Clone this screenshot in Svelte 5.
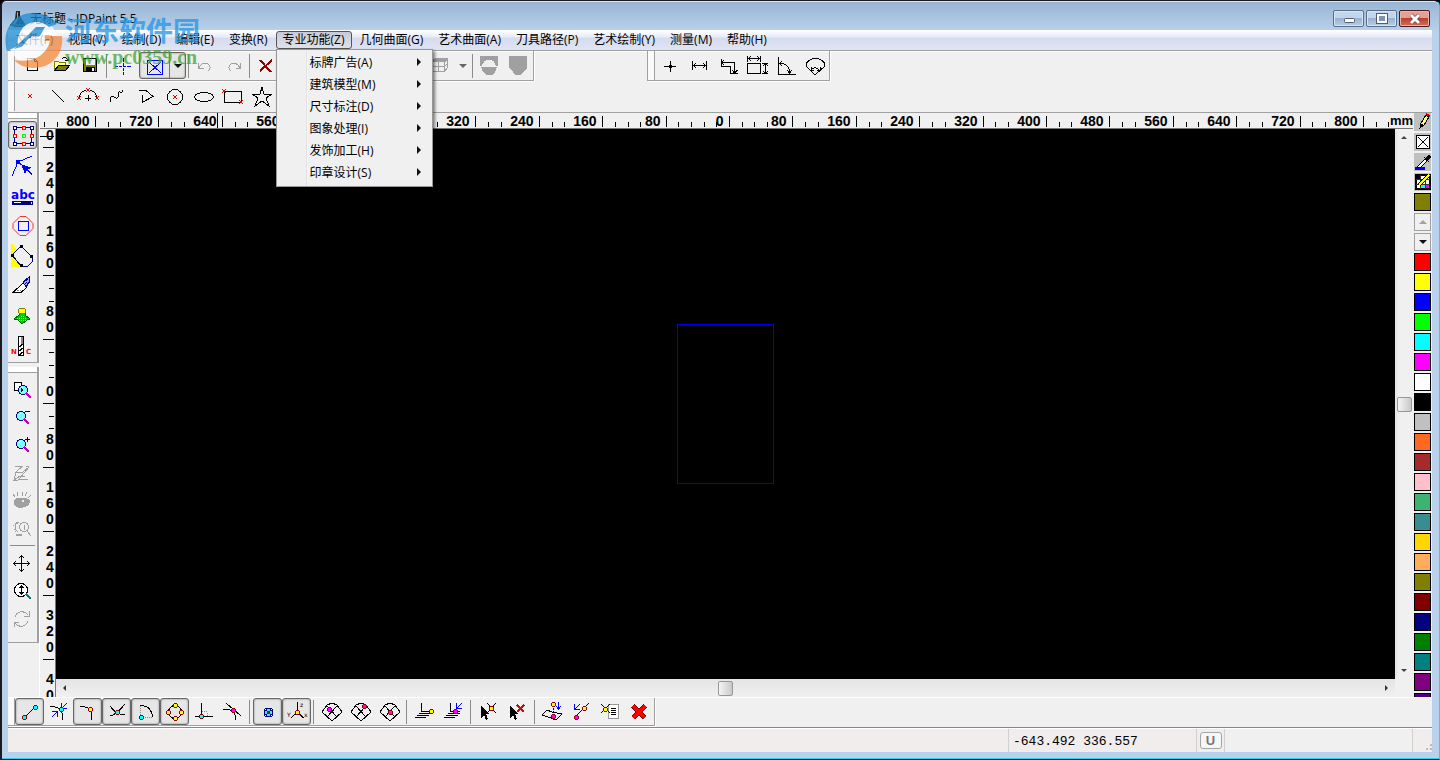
<script lang="ts">
    const menus = [
        "文件(F)", "视图(V)", "绘制(D)", "编辑(E)", "变换(R)", "专业功能(Z)",
        "几何曲面(G)", "艺术曲面(A)", "刀具路径(P)", "艺术绘制(Y)", "测量(M)", "帮助(H)",
    ];
    const submenu = ["标牌广告(A)", "建筑模型(M)", "尺寸标注(D)", "图象处理(I)", "发饰加工(H)", "印章设计(S)"];

    let openMenu = $state("专业功能(Z)");

    const drawTools = ["point", "line", "arc", "spline", "polygon", "circle", "ellipse", "rect", "star"];
    const measureTools = ["plus", "distance", "corner", "bounds", "angle", "sector"];
    const sideTools = ["select", "node", "text", "shapes", "polyline", "knife", "surface", "nc"];
    const viewTools = ["zoomArea", "zoomOut", "zoomIn", "redraw", "eye", "zoomPrev", "sep", "pan", "zoomLive", "rotate"];
    const snapTools = [
        "snapEnd", "snapNear", "snapCorner", "snapCross", "snapCenter", "snapQuad", "snapPerp", "snapTan", "sep",
        "snapGrid", "snapAxis", "sep", "meshNode", "meshEdge", "meshCenter", "sep", "planeEnd", "planeNear", "sep",
        "pickPoint", "pickDelete", "sep", "project", "along", "list", "remove",
    ];

    let pressed = $state(["select", "snapEnd", "snapCorner", "snapCross", "snapCenter", "snapQuad", "snapGrid", "snapAxis"]);

    function toggle(name: string) {
        pressed = pressed.includes(name) ? pressed.filter((n) => n !== name) : [...pressed, name];
    }

    const colors = [
        "#ff0000", "#ffff00", "#0000ff", "#00ff00", "#00ffff", "#ff00ff", "#ffffff", "#000000",
        "#c0c0c0", "#ff6820", "#a52a2a", "#ffc0cb", "#3cb371", "#388e8e", "#ffd700", "#ffad5b",
        "#808000", "#800000", "#000080", "#008000", "#008080", "#800080", "#4b0082",
    ];

    // ruler marks, measured from the zero tick
    const stepX = 63.4;
    const stepY = 63.9;
    const marksX = Array.from({ length: 22 }, (_, i) => {
        const n = i - 10;
        const label = String(Math.abs(n) * 80);
        return {
            label: n > 10 ? "" : label,
            x: Math.round(n * stepX),
            minors: Array.from({ length: n > 10 ? 2 : 5 - label.length }, (_, j) => Math.round((n - 1) * stepX + (j + 1) * 12.7)),
        };
    });
    const marksY = Array.from({ length: 10 }, (_, i) => {
        const n = i - 4;
        const label = String(Math.abs(n) * 80);
        return {
            digits: label.split(""),
            y: Math.round(n * stepY),
            minors: Array.from({ length: [0, 3, 2, 0][label.length] }, (_, j) => Math.round((n - 1) * stepY + (j + 1) * 12.7)),
        };
    });

    const dot = (x: number, y: number, fill: string) =>
        `<g stroke="none"><rect x="${x - 1}" y="${y - 2}" width="3" height="5" fill="#900000"/><rect x="${x - 2}" y="${y - 1}" width="5" height="3" fill="#900000"/><rect x="${x - 1}" y="${y - 1}" width="3" height="3" fill="${fill}"/></g>`;
    const square = (x: number, y: number, c = "#f00") => `<rect x="${x - 1}.5" y="${y - 1}.5" width="3" height="3" stroke="${c}" fill="#fff"/>`;
    const redX = (x: number, y: number) => `<path stroke="#e00000" d="M${x - 2} ${y - 2}l4 4m0-4l-4 4"/>`;
    const mesh = '<path d="M2 12l5-7 5-2 5 2 5 7-10 9zM7 6l10 11M17 6L7 17"/>';
    const plane = '<path d="M8.500 3v8.500h9M6 13.500h12M4 15.500h12M2 17.500h11"/>';
    const pointer = '<path fill="#000" stroke="none" d="M4 6v12l3-3 2 5 2-1-2-5h3z"/>';
    const nearArrow = '<path stroke="#00f" d="M20 3l-5 5M14.500 3v5.500h5"/>';
    const lens = (x: number, y: number) =>
        `<circle cx="${x}" cy="${y}" r="4.500" fill="#7ff" stroke="#000080"/><path stroke="#fff" d="M${x - 2} ${y - 1}l2-2"/><path stroke="#c000c0" stroke-width="2.500" d="M${x + 3} ${y + 3}l5 5"/>`;

    const icons: Record<string, string> = {
        fileNew: '<path fill="#fff" d="M6.500 4.500h7l3 3v9h-10zM13.500 4.500v3h3"/>',
        open: '<path fill="#ffff9c" stroke="#808000" d="M4.500 16.500v-9h4l1 1h6v3"/><path fill="#808000" d="M4.500 16.500l4-5h11l-4 5z"/><path d="M12 5c2-2 4-2 6 1m0-3v3h-3"/>',
        save: '<path fill="#808000" d="M4.500 4.500h13v13h-13z"/><path fill="#efefef" stroke="none" d="M7 5h9v6H7z"/><path fill="#000" stroke="none" d="M7 13h9v5H7z"/><path fill="#fff" stroke="none" d="M13 14h2v3h-2z"/>',
        origin: '<path stroke="#00f" d="M4 12.500h3m1 0h3m1 0h3m1 0h4M12.500 4v4m0 1v4m0 1v3m0 1v3"/>',
        frame: '<path stroke="#00f" d="M4.500 5.500h15v14h-15zM6 7l12 11M18 7L6 18"/>',
        undo: '<path stroke="#a0a0a0" d="M5.500 9v5h5M6 14c2-4 5-6 9-4 3 2 3 5 0 7"/>',
        redo: '<path stroke="#a0a0a0" d="M18.500 9v5h-5M18 14c-2-4-5-6-9-4-3 2-3 5 0 7"/>',
        cut: '<path stroke="#900000" stroke-width="2" d="M6 6l11 12M18 6L6 17"/>',
        grid: '<path fill="#a0a0a0" stroke="#a0a0a0" d="M3.500 6.500l3-2h12l-2 3h-13z"/><path stroke="#a0a0a0" d="M3.500 7.500h12v10h-12zM15.500 7.500l3-3v9l-3 4M3.500 12.500h12l3-3M9.500 7.500v10"/>',
        dome: '<path fill="#a0a0a0" stroke="none" d="M3 2h18v10H3zM4 13h16l-2 5-3 3H9l-3-3z"/><path fill="#efefef" stroke="none" d="M5 12c1-8 13-8 14 0z"/>',
        shield: '<path fill="#a0a0a0" stroke="none" d="M3 2h18v12l-4 4-2 3H9l-2-3-4-4z"/>',
        point: redX(12, 11),
        line: '<path d="M5 5l12 12"/>',
        arc: '<path d="M3 13C5 2 19 2 21 13M12.500 10v6M9 13.500h6"/>' + redX(3, 13) + redX(21, 13) + redX(12, 5),
        spline: '<path d="M5 17c1-9 3-5 6-4s2-5 3-6 2 3 4-2"/>',
        polygon: '<path d="M5 5.500h7l7 6-11 6v-8"/>',
        circle: '<circle cx="12" cy="12" r="7.500"/>' + redX(12, 12),
        ellipse: '<ellipse cx="12" cy="12" rx="9.500" ry="4.500"/>',
        rect: '<path d="M3.500 6.500h17v11h-17z"/>' + redX(3, 6) + redX(20, 17),
        star: '<path d="M12 2l2 7h8l-6 4 3 8-7-5-7 5 3-8-6-4h8z"/>',
        plus: '<path d="M6 12.500h12M12.500 7v11"/><path fill="#000" stroke="none" d="M11 11h3v3h-3z"/>',
        distance: '<path d="M5.500 7v9M19.500 7v9M6 11.500h13M9 9l-2.500 2.500L9 14M16 9l2.500 2.500L16 14"/>',
        corner: '<path d="M5.500 5v7h9v8M14 19.500h8M6 8.500h12.500V19M8 6L6 8.500 8 11M16 16l2.500 3 3-3"/>',
        bounds: '<path d="M2.500 9.500h13v10h-13zM2.500 2v6M15.500 2v6M3 4.500h12M6 2L4 4.500 6 7M12 2l2 2.500L12 7M17 9.500h6M17 19.500h6M20.500 10v9M18 12l2.500-2 2.500 2M18 17l2.500 2 2.500-2"/>',
        angle: '<path d="M4.500 3v17h17M5 9.500c7-1 11 4 10.500 10M8 7L5.500 9.500 8 12M13 16l2.500 3 2.500-3"/>',
        sector: '<path d="M12 21l-9-9c0-10 19-10 19 0zM8 16c2-3 6-3 8 0M8 12.500v3.500h3M17 12.500v3.500h-3"/>',
        select: '<path stroke="#000080" d="M3.500 4.500h17v16h-17z"/>' + square(3, 4, "#000080") + square(20, 4, "#000080") + square(3, 20, "#000080") + square(20, 20, "#000080") + square(12, 4) + square(12, 20) + square(3, 12) + square(20, 12) + square(12, 12, "#0f0"),
        node: '<path stroke="#00f" d="M7 8l14-6M7 8L1 22M7 8l4 3"/><path fill="#00f" stroke="none" d="M5 6h4v4H5zM10 10l11 4-4 1 4 5-1 1-4-5-2 4z"/>',
        text: '<text x="12" y="15" text-anchor="middle" font-family="DejaVu Sans" font-weight="bold" font-size="12" fill="#00f" stroke="none">abc</text><path fill="#000080" stroke="#000080" d="M1.500 17.500h20v3h-20z"/><path stroke="#fff" d="M3 18.500h7"/><path stroke="#ff0" d="M20.500 18v2"/>',
        shapes: '<path stroke="#f00" stroke-width=".8" shape-rendering="auto" d="M9 2.500h6l7 7v5l-7 7H9l-7-7v-5z"/><path stroke="#00f" d="M7.500 7.500h10v9h-10z"/>',
        polyline: '<path fill="#ff0" stroke="none" d="M0 0h2l8 12v9l-3 2H0z"/><path stroke="#000080" fill="#efefef" d="M1 11l9-9 11 11v5l-4 4h-7z"/><path fill="#000" stroke="none" d="M0 10h3v3H0zM9 1h3v3H9zM19 11h3v3h-3zM9 20h3v3H9z"/>',
        knife: '<path fill="#fff" d="M2 18.500L12 9l4 4-6 5.500z"/><path fill="#aaf" stroke="#000080" d="M12 8l6-5v6l-3 4z"/><path stroke="#000080" stroke-dasharray="1 1" d="M13 8l4-3M14 10l3-3M15 12l3-4"/><path stroke="#888" stroke-dasharray="2 1" d="M6 16h4"/>',
        surface: '<path fill="#0c0" stroke="#006000" d="M3 15l5-4V7h6v4l5 4-3 1-5 4-4-4z"/><path stroke="#7f7" stroke-dasharray="1 1" d="M6 14h10M8 16h7M10 12h4"/><ellipse cx="11" cy="7" rx="4" ry="2.500" fill="#ff0" stroke="#808000"/>',
        nc: '<path fill="#fff" d="M7.500 2.500h5v19h-5z"/><path fill="#888" stroke="none" d="M10 3h2v7h-2z"/><path d="M7 14l6-5M7 18l6-5M7 22l6-5"/><text x="0" y="20" font-family="DejaVu Sans" font-weight="bold" font-size="7" fill="#f00" stroke="none">N</text><text x="15" y="20" font-family="DejaVu Sans" font-weight="bold" font-size="7" fill="#f00" stroke="none">C</text>',
        zoomArea: '<path fill="#fff" d="M4.500 5.500h7v8h-7z"/>' + lens(13, 13) + '<path fill="#000" stroke="none" d="M11 11l3 2-3 2z"/>',
        zoomOut: lens(11, 11) + '<path stroke="#000080" d="M15 6.500h5"/>',
        zoomIn: lens(11, 11) + '<path stroke="#000080" d="M15 6.500h5M17.500 4v5"/>',
        redraw: '<path stroke="#a0a0a0" d="M5 5.500h7L6 11h7l6-5-10 12h9M16 5.500h3M6 11l-2 8 3-2 3-2h5M4 15v4h4"/>',
        eye: '<path fill="#a0a0a0" stroke="#a0a0a0" d="M4 12l4-3h8l4 3-2 4-5 2H8l-3-2zM5 8L3 5M8 7L7 3M12 7V3M15 7l2-4M18 9l3-3"/><circle cx="13" cy="12" r="1" fill="#eee" stroke="none"/>',
        zoomPrev: '<g stroke="#a0a0a0"><circle cx="14" cy="10" r="4.500"/><path d="M14.500 8v5M17 14l4 5M9 5l-4 3v4l3 3"/><path stroke-dasharray="1 1" d="M7 5l-4 4M4 12l2 4"/><path stroke-width="2" d="M6 18h6"/></g>',
        pan: '<path d="M4 12.500h15M11.500 5v15M6 10l-2.500 2.500L6 15M17 10l2.500 2.500L17 15M9 7l2.500-2.500L14 7M9 18l2.500 2.500L14 18"/>',
        zoomLive: '<circle cx="11" cy="11" r="6.500" fill="#fff"/><path d="M11.500 7v8M9.500 9l2-2 2 2M9.500 13l2 2 2-2"/><path stroke="#008080" stroke-width="2.500" d="M16 15l5 5"/>',
        rotate: '<path stroke="#a0a0a0" d="M5 10c2-6 9-7 13-2m1-4v5h-5M18 14c-2 6-9 7-13 2m-1 4v-5h5"/>',
        snapEnd: '<path d="M7 17L17 7"/>' + dot(6, 17, "#0ff") + dot(17, 7, "#0ff"),
        snapNear: '<path d="M3 6.500c8 0 13 2 13 13"/>' + nearArrow + '<path stroke="#00f" d="M5 17l5-5M5 11.500h5.500v5"/>' + dot(14, 9, "#0ff"),
        snapCorner: '<path d="M4 6.500c8 0 12 2 12 13"/>' + dot(14, 9, "#ff0"),
        snapCross: '<path d="M5 6c3 5 7 8 15 9M20 4c-4 4-7 10-15 12"/>' + dot(12, 12, "#0ff"),
        snapCenter: '<path d="M6 5.500c8 0 12 4 12.500 12"/><path stroke="#888" stroke-dasharray="1 1" d="M6.500 6v11.500H19"/>' + dot(7, 17, "#0ff"),
        snapQuad: '<circle cx="12" cy="12" r="6.500"/>' + dot(12, 5, "#ff0") + dot(12, 18, "#ff0") + dot(5, 12, "#ff0") + dot(18, 12, "#ff0"),
        snapPerp: '<path d="M9.500 3v13M3 16.500h18"/><path stroke="#888" stroke-dasharray="1 1" d="M10 11.500h5v5"/>' + dot(9, 16, "#0ff"),
        snapTan: '<path d="M5 3l15 13M2 9.500c9-1 14 3 12 11"/>' + dot(12, 10, "#f0f"),
        snapGrid: '<g stroke="none"><path fill="#000080" d="M9 8h7v1h1v7h-1v1H9v-1H8V9h1z"/><path fill="#0ff" d="M11 9h3v2h-3zM11 14h3v2h-3zM9 11h2v3H9zM14 11h2v3h-2z"/><path fill="#fff" d="M9 9h1v1H9zM15 9h1v1h-1zM9 15h1v1H9zM15 15h1v1h-1z"/><path fill="#c00000" d="M11 11h3v3h-3z"/></g>',
        snapAxis: '<path d="M12.500 2v10L6 18M12.500 12l6 6"/><g font-family="DejaVu Sans" font-size="6" fill="#000" stroke="none"><text x="15" y="7">z</text><text x="2" y="17">Y</text><text x="19" y="17">x</text></g>' + dot(12, 12, "#ff0"),
        meshNode: mesh + dot(9, 9, "#f0f"),
        meshEdge: mesh + dot(15, 6, "#f0f"),
        meshCenter: mesh + dot(12, 12, "#f0f"),
        planeEnd: plane + dot(18, 11, "#ff0"),
        planeNear: plane + nearArrow + dot(13, 11, "#f0f"),
        pickPoint: pointer + '<path d="M10 3l9 10M19 3l-9 10"/>' + dot(14, 8, "#ff0"),
        pickDelete: pointer + '<path stroke="#e00000" stroke-width="2.500" d="M11 5l7 7M18 5l-7 7"/>',
        project: '<path d="M12.500 5v11" stroke-dasharray="2 1"/><path d="M1 15l5-5 5 2 10 2-6 6-5-2z"/><path stroke="#00f" d="M17.500 2v7M15 6l2.500 3L20 6"/>' + dot(12, 4, "#ff0") + dot(12, 16, "#f0f"),
        along: '<path d="M5 17L19 3"/><path stroke="#00f" d="M10 4L4 10M4.500 4v5.500h5"/>' + dot(14, 8, "#ff0") + dot(6, 17, "#f0f"),
        list: '<path fill="#fff" stroke="#999" d="M9.500 4.500h10v14h-10z"/><path d="M2 4l9 9M11 4l-9 9M12 8.500h5M12 10.500h5M12 12.500h5M12 14.500h5"/>' + dot(6, 9, "#ff0"),
        remove: '<path stroke="#700000" stroke-width="5" d="M5 6l12 12M17 6L5 18"/><path stroke="#f00" stroke-width="4" d="M5 6l12 12M17 6L5 18"/>',
        pencil: '<path fill="#ffff80" d="M9 18l1-5 5-8 3 2-5 8z"/><path fill="#000" d="M9 18l1-4 2 1z"/><path stroke="#c00000" stroke-width="2" d="M15 4l4 2"/>',
        none: '<path fill="#fff" d="M5.500 5.500h13v13h-13zM7 7l10 10M17 7L7 17"/>',
        dropper: '<path stroke="#00f" stroke-width="3" d="M4 18.500h10"/><path fill="#fff" d="M6 17l8-8 2 2-7 7z"/><path fill="#000" d="M13 7l5 5M15 8l3-3 2 2-3 3z"/>',
        palette: '<path fill="#fff" stroke-width="2" d="M5 5h14v14H5z"/><path stroke="#333" d="M9.500 5v14M14.500 5v14M5 9.500h14M5 14.500h14"/><path fill="#000" stroke="none" d="M6 6h3v3H6z"/><path fill="#f0f" stroke="none" d="M15 15h3v3h-3z"/><path fill="#0ff" stroke="none" d="M10 15h4v3h-4z"/><path stroke-width="4" d="M8 15L18 5"/><path stroke="#ff0" stroke-width="2" d="M8 15L18 5"/>',
    };
</script>

{#snippet icon(name: string)}
    <svg class="icon" viewBox="0 0 24 24" width="24" height="24" fill="none" stroke="#000" shape-rendering="crispEdges" aria-hidden="true">{@html icons[name]}</svg>
{/snippet}

{#snippet tool(name: string)}
    {#if name === "sep"}
        <span class="sep"></span>
    {:else}
        <button class="tool {pressed.includes(name) ? 'pressed' : ''}" aria-label={name} onclick={() => toggle(name)}>{@render icon(name)}</button>
    {/if}
{/snippet}

<div class="window">
    <header class="titlebar">
        <svg class="app-icon" viewBox="0 0 18 18" width="18" height="18" aria-hidden="true">
            <path fill="#222" d="M7 1h4v5l5 8-3 3H5l-3-3 4-5z" /><path fill="#9ab" d="M8 2h1v7l-3 5H4l4-6z" /><path fill="#355" d="M1 14h15v2H1z" />
        </svg>
        <h1>无标题 - JDPaint 5.5</h1>
        <div class="window-buttons">
            <button aria-label="minimize"><svg width="14" height="12" viewBox="0 0 14 12"><rect x="2.500" y="5.500" width="10" height="4" rx="1" fill="#fff" stroke="#555b70" /></svg></button>
            <button aria-label="restore"><svg width="14" height="12" viewBox="0 0 14 12"><rect x="3" y="2" width="8" height="7" fill="none" stroke="#555b70" stroke-width="4" /><rect x="3" y="2" width="8" height="7" fill="#7b95b3" stroke="#fff" stroke-width="2" /></svg></button>
            <button class="close" aria-label="close"><svg width="14" height="12" viewBox="0 0 14 12"><path d="M3 2l8 8M11 2l-8 8" stroke="#6b3434" stroke-width="4" /><path d="M3 2l8 8M11 2l-8 8" stroke="#fff" stroke-width="3" /></svg></button>
        </div>
    </header>

    <div class="client">
        <nav class="menubar">
            {#each menus as menu}
                <div class="menu">
                    <button class="menu-title {openMenu === menu ? 'open' : ''}" onclick={() => (openMenu = menu)}>{menu}</button>
                    {#if openMenu === menu}
                        <div class="dropdown">
                            {#each submenu as item}
                                <button class="dropdown-item">{item}<span class="caret"></span></button>
                            {/each}
                        </div>
                    {/if}
                </div>
            {/each}
        </nav>

        <div class="toolbar-row">
            <div class="toolbar main-tools">
                <span class="grip"></span>
                {@render tool("fileNew")}
                {@render tool("open")}
                {@render tool("save")}
                {@render tool("sep")}
                {@render tool("origin")}
                <div class="split">
                    {@render tool("frame")}
                    <button class="drop" aria-label="frame options"><span class="down"></span></button>
                </div>
                {@render tool("sep")}
                {@render tool("undo")}
                {@render tool("redo")}
                {@render tool("sep")}
                {@render tool("cut")}
                <div class="tail">
                    {@render tool("grid")}
                    <button class="drop dim" aria-label="grid options"><span class="down"></span></button>
                    {@render tool("sep")}
                    {@render tool("dome")}
                    {@render tool("shield")}
                </div>
            </div>
            <div class="toolbar measure">
                <span class="grip"></span>
                {#each measureTools as name}{@render tool(name)}{/each}
            </div>
        </div>
        <div class="toolbar-row second">
            <div class="toolbar plain">
                <span class="grip"></span>
                {#each drawTools as name}{@render tool(name)}{/each}
            </div>
        </div>

        <main class="workspace">
            <aside class="side">
                <div class="side-group">
                    <span class="hgrip"></span>
                    {#each sideTools as name}{@render tool(name)}{/each}
                </div>
                <div class="side-group view">
                    <span class="hgrip"></span>
                    {#each viewTools as name}{@render tool(name)}{/each}
                </div>
            </aside>

            <div class="drawing">
                <div class="ruler-x">
                    <svg width="100%" height="15" shape-rendering="crispEdges">
                        <svg x="50%" overflow="visible">
                            <g transform="translate(2 0)">
                                {#each marksX as mark}
                                    {#if mark.label}
                                        <rect x={mark.x} y="3" width="1" height="11" />
                                        <text x={mark.x - 5} y="13" text-anchor="end">{mark.label}</text>
                                    {/if}
                                    {#each mark.minors as x}
                                        <rect {x} y="9" width="1" height="5" />
                                    {/each}
                                {/each}
                                <rect x="-512" y="0" width="1" height="15" />
                            </g>
                        </svg>
                    </svg>
                    <span class="unit">mm</span>
                </div>
                <div class="ruler-y">
                    <svg width="16" height="100%" shape-rendering="crispEdges">
                        <svg y="50%" overflow="visible">
                            <g transform="translate(0 -10)">
                                {#each marksY as mark}
                                    <rect x="3" y={mark.y} width="11" height="1" />
                                    {#each mark.digits as digit, i}
                                        <text x="6" y={mark.y - 7 - (mark.digits.length - 1 - i) * 16}>{digit}</text>
                                    {/each}
                                    {#each mark.minors as y}
                                        <rect x="9" {y} width="5" height="1" />
                                    {/each}
                                {/each}
                                <rect x="0" y="-267" width="14" height="1" />
                            </g>
                        </svg>
                    </svg>
                </div>
                <div class="canvas"><div class="sheet"></div></div>
                <div class="scroll vertical">
                    <button aria-label="scroll up"><span class="arrow up"></span></button>
                    <span class="thumb"></span>
                    <button aria-label="scroll down"><span class="arrow downward"></span></button>
                </div>
                <div class="scroll horizontal">
                    <button aria-label="scroll left"><span class="arrow left"></span></button>
                    <span class="thumb"></span>
                    <button aria-label="scroll right"><span class="arrow right"></span></button>
                </div>
            </div>

            <div class="palette">
                {#each ["pencil", "none", "dropper", "palette"] as name}
                    <button class="cell mode" aria-label={name}>{@render icon(name)}</button>
                {/each}
                <button class="cell current" aria-label="current colour"></button>
                <button class="cell step dim" aria-label="previous"><span class="upward"></span></button>
                <button class="cell step" aria-label="next"><span class="down"></span></button>
                {#each colors as color}
                    <button class="cell" style="background: {color}" aria-label={color}></button>
                {/each}
            </div>
        </main>

        <div class="toolbar-row snap">
            <div class="toolbar snap-tools">
                <span class="grip"></span>
                {#each snapTools as name}{@render tool(name)}{/each}
            </div>
        </div>

        <footer class="status">
            <span class="message"></span>
            <span class="coords">-643.492 336.557</span>
            <span class="unit-box"><button>U</button></span>
            <span class="blank"></span>
            <span class="size-grip"></span>
        </footer>
    </div>

    <div class="watermark">
        <svg viewBox="0 0 58 56" width="58" height="56" aria-hidden="true">
            <circle cx="28" cy="28" r="24" fill="#fff" />
            <path fill="#1d8bd1" d="M2 38C-4 18 8 0 28 0c12 0 20 5 24 11l-8 3c-8-7-20-7-27 2-4 6-5 12-4 17z" />
            <path fill="#f4893b" d="M57 23c2 18-10 32-28 32-9 0-15-3-20-8 17 3 32-3 36-19h-7l3-5z" />
            <path fill="#1d8bd1" d="M9 36l22-22h9l-5 9h-8l-8 10z" />
            <path fill="#fff" d="M24 25h17l-2 5H28l-9 14-7-4z" />
        </svg>
        <div class="mark-text">
            <span class="site">河东软件园</span>
            <span class="url">www.pc0359.cn</span>
        </div>
    </div>
</div>

<style>
    :global(body) {
        margin: 0;
        background: #000;
    }

    .window {
        position: relative;
        display: flex;
        flex-direction: column;
        box-sizing: border-box;
        height: 100vh;
        padding: 0 7px 7px 6px;
        border: 1px solid #1c1c20;
        border-right-color: #2ad0e8;
        border-left-width: 2px;
        border-radius: 6px 6px 0 0;
        background: linear-gradient(#98b4d3, #b9d1ea 30px);
        box-shadow: inset 0 1px #d8e8f8, inset 0 -1px #2ad0e8;
        font-family: "Open Sans", "Noto Sans CJK SC", sans-serif;
        font-size: 12px;
        color: #000;
        overflow: hidden;
    }

    button {
        padding: 0;
        border: 0;
        background: none;
        font: inherit;
        color: inherit;
    }

    .titlebar {
        display: flex;
        align-items: center;
        flex: none;
        height: 29px;
        padding-top: 6px;
        box-sizing: border-box;
    }

    .app-icon {
        margin: 0 3px 0 1px;
    }

    h1 {
        flex: 1;
        margin: 0;
        font-size: 12px;
        font-weight: normal;
        line-height: 16px;
    }

    .window-buttons {
        display: flex;
        gap: 2px;
        padding-right: 2px;
    }

    .window-buttons button {
        display: grid;
        place-items: center;
        width: 31px;
        height: 17px;
        border: 1px solid #5a6e8a;
        border-radius: 2px;
        box-sizing: border-box;
        background: linear-gradient(#c3d5e9 45%, #98b3d1 50%, #b6cee6);
        box-shadow: inset 0 0 0 1px #d6e5f5;
    }

    .window-buttons .close {
        border-color: #4c1a1f;
        background: linear-gradient(#e3a095 45%, #bd3f2c 50%, #d2705b);
        box-shadow: inset 0 0 0 1px #e7b3aa;
    }

    .client {
        display: flex;
        flex-direction: column;
        flex: 1;
        min-height: 0;
        background: #f0f0f0;
    }

    .menubar {
        display: flex;
        flex: none;
        gap: 1px;
        height: 20px;
        padding-left: 1px;
        border-bottom: 1px solid #a0a0a0;
        box-shadow: 0 1px #fff;
        background: linear-gradient(#fff, #e8ecf6 7px, #d5dbee 8px, #e0e5f4);
    }

    .menu {
        position: relative;
    }

    .menu-title {
        height: 18px;
        margin-top: 1px;
        padding: 0 6px;
        border: 1px solid transparent;
        box-sizing: border-box;
        line-height: 14px;
        white-space: nowrap;
    }

    .menu-title.open {
        border-color: #555;
        border-radius: 3px;
        background: linear-gradient(#c7cbd7, #dfe2ea);
    }

    .dropdown {
        position: absolute;
        z-index: 5;
        top: 19px;
        left: 0;
        width: 157px;
        padding: 1px 0 3px;
        border: 1px solid #979797;
        box-sizing: border-box;
        background: linear-gradient(90deg, transparent 29px, #d9d9d9 29px, #fff 31px, transparent 31px) #f0f0f0;
        box-shadow: 2px 2px 3px rgba(0, 0, 0, 0.5);
    }

    .dropdown-item {
        display: flex;
        align-items: center;
        justify-content: space-between;
        width: 100%;
        height: 22px;
        padding: 0 11px 0 33px;
    }

    .caret {
        border: 4px solid transparent;
        border-left-color: #111;
        border-right: 0;
    }

    .toolbar-row {
        display: flex;
        flex: none;
        height: 31px;
    }

    .second {
        height: 30px;
        border-bottom: 1px solid #a0a0a0;
    }

    .toolbar {
        display: flex;
        align-items: center;
        height: 30px;
        box-sizing: border-box;
        border-right: 1px solid #a0a0a0;
        border-bottom: 1px solid #a0a0a0;
        box-shadow: 1px 1px #fff;
    }

    .toolbar.plain {
        border-color: transparent;
        box-shadow: none;
    }

    .main-tools {
        width: 526px;
    }

    .main-tools .grip {
        margin-right: 3px;
    }

    .tail {
        display: flex;
        align-items: center;
        margin: 0 1px 0 auto;
    }

    .measure {
        margin-left: 113px;
        border-left: 1px solid #a0a0a0;
    }

    .grip {
        flex: none;
        align-self: stretch;
        width: 6px;
        border-right: 1px solid #a0a0a0;
        background: #fafafa;
    }

    .tool {
        display: grid;
        place-items: center;
        flex: none;
        width: 29px;
        height: 27px;
    }

    .tool.pressed,
    .split {
        border: 1px solid #666;
        border-radius: 3px;
        box-sizing: border-box;
        background: #e6e6e6;
        box-shadow: inset 0 0 2px #777;
    }

    .icon {
        display: block;
        overflow: visible;
    }

    .sep {
        flex: none;
        width: 1px;
        height: 24px;
        margin: 0 3px 0 2px;
        background: #8c8c8c;
    }

    .main-tools .sep {
        margin: 0 1px;
    }

    .split {
        display: flex;
        height: 27px;
        margin: 0 1px 0 2px;
    }

    .drop {
        display: grid;
        place-items: center;
        width: 16px;
    }

    .split .drop {
        border-left: 1px solid #777;
    }

    .down {
        border: 4px solid transparent;
        border-top-color: #111;
        border-bottom: 0;
    }

    .upward {
        border: 4px solid transparent;
        border-bottom-color: #a0a0a0;
        border-top: 0;
    }

    .dim .down {
        border-top-color: #666;
    }

    .workspace {
        display: flex;
        flex: 1;
        min-height: 0;
    }

    .side {
        display: flex;
        flex-direction: column;
        flex: none;
        width: 31px;
        border-right: 1px solid #fff;
    }

    .side-group {
        display: flex;
        flex-direction: column;
        align-items: center;
        padding-bottom: 1px;
        margin-bottom: 4px;
        border-right: 2px solid #a0a0a0;
        border-bottom: 1px solid #a0a0a0;
    }

    .side-group .tool {
        height: 30px;
    }

    .side-group .pressed {
        height: 28px;
        margin: 0 0 2px;
    }

    .hgrip {
        width: 100%;
        height: 5px;
        margin-bottom: 2px;
        border-bottom: 1px solid #a0a0a0;
        background: #fff;
    }

    .side-group.view {
        align-items: flex-start;
        padding-bottom: 9px;
    }

    .view .tool {
        width: 28px;
        height: 28px;
    }

    .view .sep {
        width: 25px;
        height: 1px;
        margin: 2px 2px 3px;
    }

    .drawing {
        display: grid;
        grid-template-columns: 16px 1fr 18px;
        grid-template-rows: 16px 1fr 18px;
        flex: 1;
        min-width: 0;
    }

    .ruler-x {
        display: flex;
        position: relative;
        grid-column: 1 / -1;
        border-bottom: 1px solid #777;
    }

    .ruler-x,
    .ruler-y {
        min-width: 0;
        min-height: 0;
        overflow: hidden;
        font-family: "Liberation Sans", Arial, sans-serif;
        font-size: 14px;
        font-weight: bold;
    }

    .unit {
        position: absolute;
        right: 0;
        bottom: 0;
        line-height: 15px;
        font-size: 13px;
    }

    .ruler-y {
        grid-row: 2 / -1;
        border-right: 1px solid #777;
    }

    .ruler-y svg {
        display: block;
    }

    .canvas {
        display: grid;
        place-items: center;
        background: #000;
    }

    .sheet {
        width: 97px;
        height: 160px;
        border: 1px solid #0000f0;
        box-sizing: border-box;
    }

    .scroll {
        display: flex;
        align-items: center;
        justify-content: space-between;
        background: linear-gradient(#e4e4e4, #f0f0f0);
    }

    .scroll.vertical {
        flex-direction: column;
        background: linear-gradient(90deg, #e4e4e4, #f0f0f0 4px);
    }

    .scroll button {
        display: grid;
        place-items: center;
        width: 17px;
        height: 17px;
    }

    .thumb {
        width: 15px;
        height: 15px;
        border: 1px solid #979797;
        border-radius: 2px;
        box-sizing: border-box;
        background: linear-gradient(90deg, #f5f5f5, #c8c8c8);
    }

    .arrow {
        border: 3px solid transparent;
    }

    .arrow.up {
        border-bottom-color: #444;
        border-top: 0;
    }

    .arrow.downward {
        border-top-color: #444;
        border-bottom: 0;
    }

    .arrow.left {
        border-right-color: #333;
        border-left: 0;
    }

    .arrow.right {
        border-left-color: #333;
        border-right: 0;
    }

    .palette {
        display: flex;
        flex-direction: column;
        align-items: center;
        gap: 2px;
        flex: none;
        width: 19px;
        overflow: hidden;
    }

    .cell {
        display: grid;
        place-content: center;
        flex: none;
        width: 17px;
        height: 18px;
        border: 1px solid #000;
        box-sizing: border-box;
        overflow: hidden;
    }

    .cell.mode {
        border: 0;
        background: #c0c0c0;
    }

    .cell.current {
        background: #808000;
    }

    .cell.step {
        border-color: #a0a0a0;
    }

    .snap {
        height: 31px;
        border-top: 1px solid #fff;
        border-bottom: 1px solid #888;
        box-sizing: border-box;
    }

    .snap .toolbar {
        height: 28px;
    }

    .status {
        display: flex;
        flex: none;
        height: 23px;
        border-top: 1px solid #fff;
        background: #f1edec;
    }

    .status span {
        border-right: 1px solid #d0d0d0;
        box-sizing: border-box;
    }

    .message {
        flex: 1;
    }

    .coords {
        width: 188px;
        padding-left: 4px;
        font-family: "Liberation Mono", monospace;
        font-size: 13px;
        line-height: 26px;
    }

    .unit-box {
        display: grid;
        place-items: center;
        width: 28px;
    }

    .unit-box button {
        width: 22px;
        height: 17px;
        border: 1px solid #a0a8a8;
        border-radius: 3px;
        box-sizing: border-box;
        background: #f6f6f6;
        font-family: "Liberation Sans", Arial, sans-serif;
        font-size: 13px;
        font-weight: bold;
        line-height: 14px;
        color: #777;
    }

    .blank {
        width: 188px;
        background: #f0f0f0;
    }

    .status .size-grip {
        align-self: flex-end;
        width: 19px;
        height: 9px;
        border: 0;
        background: radial-gradient(#b8b8b8 1px, transparent 1px) 0 0 / 4px 4px;
        clip-path: polygon(100% 0, 100% 100%, 50% 100%);
    }

    .watermark {
        position: absolute;
        z-index: 4;
        top: 12px;
        left: 3px;
        display: flex;
        gap: 2px;
        opacity: 0.75;
        pointer-events: none;
    }

    .mark-text {
        display: flex;
        flex-direction: column;
    }

    .site {
        font-family: "Noto Sans CJK SC", sans-serif;
        font-size: 27px;
        font-weight: bold;
        line-height: 34px;
        color: #2196e3;
    }

    .url {
        font-family: "Liberation Serif", serif;
        font-size: 20px;
        font-weight: bold;
        line-height: 20px;
        color: #3fa535;
    }
</style>
